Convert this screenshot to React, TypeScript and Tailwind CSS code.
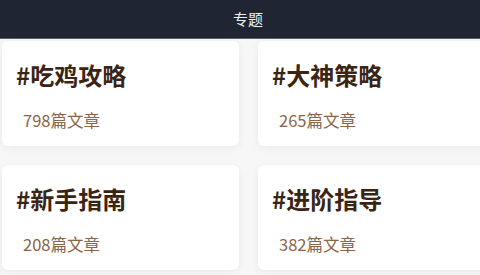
const topics = [
  { name: "吃鸡攻略", count: 798 },
  { name: "大神策略", count: 265 },
  { name: "新手指南", count: 208 },
  { name: "进阶指导", count: 382 },
];

export default function App() {
  return (
    <div
      className="w-[480px] h-[275px] overflow-hidden bg-[#f7f7f7] flex flex-col"
      style={{ fontFamily: '"Noto Sans CJK SC", "Noto Sans", sans-serif' }}
    >
      <div className="h-[39px] shrink-0 bg-[#1f2532] border-b border-[#5b6068] flex items-center justify-center pl-4">
        <span className="text-[15px] text-[#eef0f3]">专题</span>
      </div>
      <div className="grid grid-cols-[237px_237px] gap-x-[19px] gap-y-[19px] pl-[2px] pt-[2px]">
        {topics.map((t) => (
          <div
            key={t.name}
            className="h-[105px] bg-white rounded-md shadow-[0_2px_8px_rgba(0,0,0,0.06)] pl-[14px] pt-[18px]"
          >
            <div className="text-[24px] leading-[32px] font-semibold text-[#3a2414]">#{t.name}</div>
            <div className="mt-[18px] pl-[7px] text-[16.5px] leading-[22px] text-[#8b6546]">
              {t.count}篇文章
            </div>
          </div>
        ))}
      </div>
    </div>
  );
}
